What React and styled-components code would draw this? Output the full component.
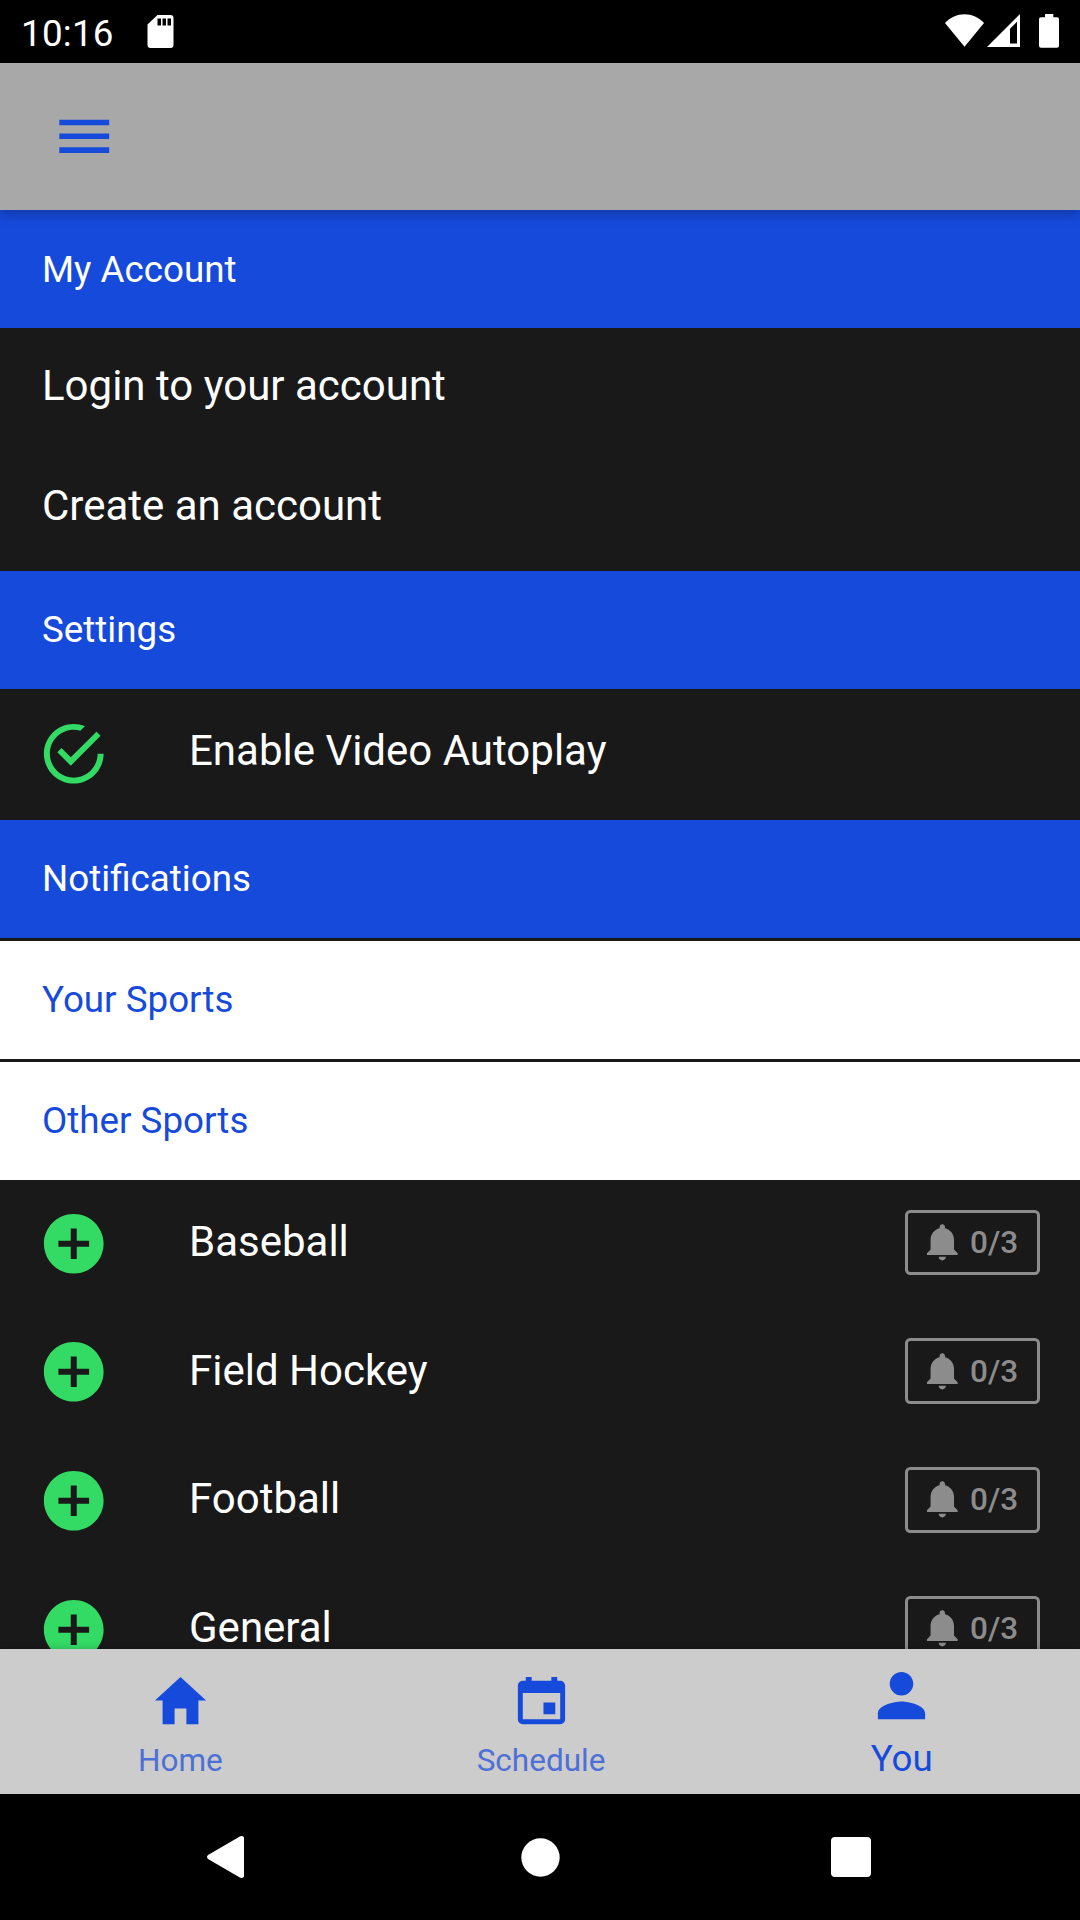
import React from "react";
import styled, { createGlobalStyle } from "styled-components";
import {
  IoMdAddCircle,
  IoMdCalendar,
  IoMdCheckmarkCircleOutline,
  IoMdHome,
  IoMdMenu,
  IoMdNotifications,
  IoMdPerson,
} from "react-icons/io";

const blue = "#164adb";
const green = "#33db65";
const dark = "#191919";

const GlobalStyle = createGlobalStyle`
  * {
    box-sizing: border-box;
  }
  body {
    margin: 0;
    background: #000;
    font-family: Roboto, sans-serif;
  }
`;

const Screen = styled.div`
  width: 1080px;
  height: 1920px;
  display: flex;
  flex-direction: column;
  overflow: hidden;
  background: ${dark};
`;

const StatusBar = styled.div`
  flex: none;
  height: 63px;
  padding: 0 21px;
  display: flex;
  align-items: flex-start;
  background: #000;
  color: #fff;
`;

const Clock = styled.span`
  width: 126px;
  padding-top: 12px;
  font-size: 36.75px;
  line-height: 43px;
  letter-spacing: 0.25px;
`;

const StatusIcon = styled.svg`
  display: block;
  flex: none;
  fill: #fff;
  margin-top: 14px;
  margin-left: ${(props) => props.$left || 0}px;
`;

const Spacer = styled.div`
  flex: 1;
`;

const Header = styled.div`
  flex: none;
  height: 147px;
  padding: 0 51px 1px;
  display: flex;
  align-items: center;
  background: #a8a8a8;
  color: ${blue};
  z-index: 1;
  box-shadow: 0 4px 11px rgba(0, 0, 0, 0.25);
`;

const MenuButton = styled.button`
  display: flex;
  padding: 0;
  border: none;
  background: none;
  color: inherit;
  font-size: 66.5px;
`;

const Content = styled.div`
  flex: 1;
  min-height: 0;
  overflow: hidden;
`;

const Divider = styled.div`
  height: 118px;
  padding: 0 42px 1px;
  display: flex;
  align-items: center;
  font-size: 36.75px;
  background: ${(props) => (props.$light ? "#fff" : blue)};
  color: ${(props) => (props.$light ? blue : "#fff")};
  ${(props) => props.$light && `margin-top: 3px;`}

  &:first-child {
    padding: 1px 42px 0;
  }
`;

const AccountList = styled.div`
  height: 243px;
`;

const AccountItem = styled.div`
  height: 120px;
  padding: 0 42px 6px;
  display: flex;
  align-items: center;
  color: #fff;
  font-size: 42px;
`;

const Item = styled.div`
  height: ${(props) => props.$height || 128.7}px;
  padding: 0 40px 2px 37px;
  display: flex;
  align-items: center;
  color: #fff;
`;

const ItemIcon = styled.div`
  display: flex;
  width: 152px;
  color: ${green};
  font-size: 73.5px;
`;

const ItemLabel = styled.span`
  flex: 1;
  padding-bottom: ${(props) => props.$bottom || 4}px;
  font-size: 42px;
`;

const Badge = styled.div`
  width: 135px;
  height: 65.6px;
  margin-bottom: 2px;
  padding-left: 11.5px;
  display: flex;
  align-items: center;
  border: 3px solid #8c8c8c;
  border-radius: 5.25px;
  color: #8c8c8c;
  font-size: 31.5px;
  font-weight: 500;

  svg {
    font-size: 44.6px;
    margin-right: 6px;
  }
`;

const TabBar = styled.div`
  flex: none;
  height: 145px;
  display: flex;
  background: #ccc;
  z-index: 1;
  box-shadow: 0 0 8px rgba(0, 0, 0, 0.2);
`;

const Tab = styled.div`
  flex: none;
  width: 360.7px;
  display: flex;
  flex-direction: column;
  align-items: center;
  padding-top: ${(props) => (props.$active ? 15 : 20)}px;
  color: ${blue};

  svg {
    flex: none;
    font-size: 63px;
  }
`;

const TabLabel = styled.span`
  margin-top: 10px;
  font-size: ${(props) => (props.$active ? 36.75 : 31.5)}px;
  line-height: ${(props) => (props.$active ? 43 : 37)}px;
  opacity: ${(props) => (props.$active ? 1 : 0.7)};
`;

const NavBar = styled.div`
  flex: none;
  height: 126px;
  padding-left: 207px;
  display: flex;
  align-items: center;
  background: #000;

  svg {
    display: block;
    fill: #fff;
  }
`;

const HomeKey = styled.svg`
  margin: 0 271.5px 0 276.5px;
`;

const sports = ["Baseball", "Field Hockey", "Football", "General"];

const tabs = [
  { label: "Home", icon: <IoMdHome /> },
  { label: "Schedule", icon: <IoMdCalendar /> },
  { label: "You", icon: <IoMdPerson />, active: true },
];

const App = () => {
  return (
    <>
      <GlobalStyle />
      <Screen>
        <StatusBar>
          <Clock>10:16</Clock>
          {/* sd card */}
          <StatusIcon width="27" height="35" viewBox="0 0 27 35">
            <path
              fillRule="evenodd"
              d="M10.500 1h13a3 3 0 0 1 3 3v27a3 3 0 0 1-3 3h-20a3 3 0 0 1-3-3V10.500zM10.500 4.500v7h3.500v-7zM15.500 4.500v7h3.500v-7zM20.500 4.500v7h3.500v-7z"
            />
          </StatusIcon>
          <Spacer />
          {/* wifi */}
          <StatusIcon width="39" height="34" viewBox="0 0 39 34">
            <path d="M0 9C10.500-2.700 28.500-2.700 39 9L19.500 32.700z" />
          </StatusIcon>
          {/* signal */}
          <StatusIcon $left={3} width="33" height="34" viewBox="0 0 33 34">
            <path
              fillRule="evenodd"
              d="M33 0v33H0zM30 7.800l-7 7V29.500h7z"
            />
          </StatusIcon>
          {/* battery */}
          <StatusIcon $left={19} width="20" height="34" viewBox="0 0 20 34">
            <path d="M6 0h8.300v3.300H18a2 2 0 0 1 2 2v26.500a2 2 0 0 1-2 2H2a2 2 0 0 1-2-2V5.300a2 2 0 0 1 2-2h4z" />
          </StatusIcon>
        </StatusBar>
        <Header>
          <MenuButton>
            <IoMdMenu />
          </MenuButton>
        </Header>
        <Content>
          <Divider>My Account</Divider>
          <AccountList>
            <AccountItem>Login to your account</AccountItem>
            <AccountItem>Create an account</AccountItem>
          </AccountList>
          <Divider>Settings</Divider>
          <Item $height={131}>
            <ItemIcon>
              <IoMdCheckmarkCircleOutline />
            </ItemIcon>
            <ItemLabel $bottom={6}>Enable Video Autoplay</ItemLabel>
          </Item>
          <Divider>Notifications</Divider>
          <Divider $light>Your Sports</Divider>
          <Divider $light>Other Sports</Divider>
          {sports.map((sport) => (
            <Item key={sport}>
              <ItemIcon>
                <IoMdAddCircle />
              </ItemIcon>
              <ItemLabel>{sport}</ItemLabel>
              <Badge>
                <IoMdNotifications />
                0/3
              </Badge>
            </Item>
          ))}
        </Content>
        <TabBar>
          {tabs.map((tab) => (
            <Tab key={tab.label} $active={tab.active}>
              {tab.icon}
              <TabLabel $active={tab.active}>{tab.label}</TabLabel>
            </Tab>
          ))}
        </TabBar>
        <NavBar>
          <svg width="37" height="42" viewBox="0 0 37 42">
            <path d="M32.800.5C35 -.7 37 .2 37 2.500v37c0 2.300-2 3.200-4.200 2L1.500 23.200c-2-1.200-2-3.200 0-4.400z" />
          </svg>
          <HomeKey width="39" height="39" viewBox="0 0 39 39">
            <circle cx="19.500" cy="19.500" r="19.200" />
          </HomeKey>
          <svg width="40" height="40" viewBox="0 0 40 40">
            <rect width="40" height="40" rx="4" />
          </svg>
        </NavBar>
      </Screen>
    </>
  );
};

export default App;
